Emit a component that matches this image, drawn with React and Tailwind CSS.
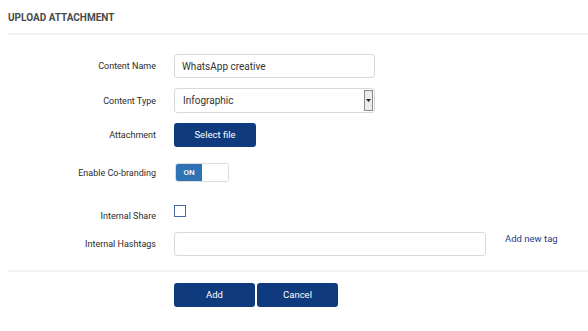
import { useState } from "react";

function Row({ label, labelClass = "pt-[2px]", children, className = "" }) {
  return (
    <div className={`flex items-center ${className}`}>
      <div className={`w-[156px] shrink-0 text-right text-[9px] text-[#2b2b2b] ${labelClass}`}>
        {label}
      </div>
      <div className="ml-[18px] flex items-center">{children}</div>
    </div>
  );
}

export default function App() {
  const [cobrand, setCobrand] = useState(true);
  const [share, setShare] = useState(false);

  return (
    <div className="w-[588px] h-[331px] bg-white font-['Roboto',sans-serif] overflow-hidden">
      <h2 className="pl-2 pt-[11px] text-[10px] font-bold text-[#4a4a4a] leading-[13px]">
        UPLOAD ATTACHMENT
      </h2>
      <div className="ml-2 mt-[9px] h-[2px] bg-[#f3f3f3]" />

      <Row label="Content Name" className="mt-[19px]">
        <input
          defaultValue="WhatsApp creative"
          className="w-[201px] h-[24px] border border-[#d9d9d9] rounded-[3px] px-[7px] text-[10px] text-[#333] outline-none"
        />
      </Row>

      <Row label="Content Type" className="mt-[10px]">
        <div className="relative w-[201px] h-[25px] border border-[#d9d9d9] rounded-[3px] flex items-center pl-[8px] text-[10px] text-[#333]">
          Infographic
          <div className="absolute right-[1px] top-[1px] bottom-[1px] w-[9px] border border-[#8a8a8a] bg-[#ececec] flex items-center justify-center">
            <svg width="5" height="3" viewBox="0 0 5 3">
              <path d="M0 0h5L2.5 3z" fill="#222" />
            </svg>
          </div>
        </div>
      </Row>

      <Row label="Attachment" className="mt-[10px]">
        <button className="w-[82px] h-[24px] rounded-[3px] bg-[#0f3a7d] text-white text-[9.5px]">
          Select file
        </button>
      </Row>

      <Row label="Enable Co-branding" className="mt-[16px]">
        <button
          onClick={() => setCobrand(!cobrand)}
          className="w-[54px] h-[19px] border border-[#dcdcdc] rounded-[3px] flex overflow-hidden ml-[1px]"
        >
          <span className={`w-[26px] h-full flex items-center justify-center text-[8px] font-medium ${cobrand ? "bg-[#2f73b5] text-white" : "bg-white text-transparent"}`}>
            ON
          </span>
          <span className="flex-1 h-full bg-white" />
        </button>
      </Row>

      <Row label="Internal Share" labelClass="pt-[5px] leading-[12px]" className="mt-[23px] !items-start">
        <button
          onClick={() => setShare(!share)}
          className={`w-[12px] h-[12px] border border-[#4a67a8] ${share ? "bg-[#0f3a7d]" : "bg-white"}`}
        />
      </Row>

      <div className="flex items-center mt-[10px]">
        <div className="w-[156px] shrink-0 text-right text-[9px] text-[#2b2b2b] pt-[2px]">
          Internal Hashtags
        </div>
        <input className="ml-[18px] w-[312px] h-[24px] border border-[#d9d9d9] rounded-[3px] px-2 text-[10px] outline-none" />
        <a href="#" className="ml-[19px] -mt-[9px] text-[9.5px] text-[#1f3c88]">
          Add new tag
        </a>
      </div>

      <div className="ml-2 mt-[14px] h-[2px] bg-[#f3f3f3]" />

      <div className="flex mt-[11px] ml-[174px] gap-[2px]">
        <button className="w-[81px] h-[24px] rounded-[3px] bg-[#0f3a7d] text-white text-[9.5px]">
          Add
        </button>
        <button className="w-[81px] h-[24px] rounded-[3px] bg-[#0f3a7d] text-white text-[9.5px]">
          Cancel
        </button>
      </div>
    </div>
  );
}
